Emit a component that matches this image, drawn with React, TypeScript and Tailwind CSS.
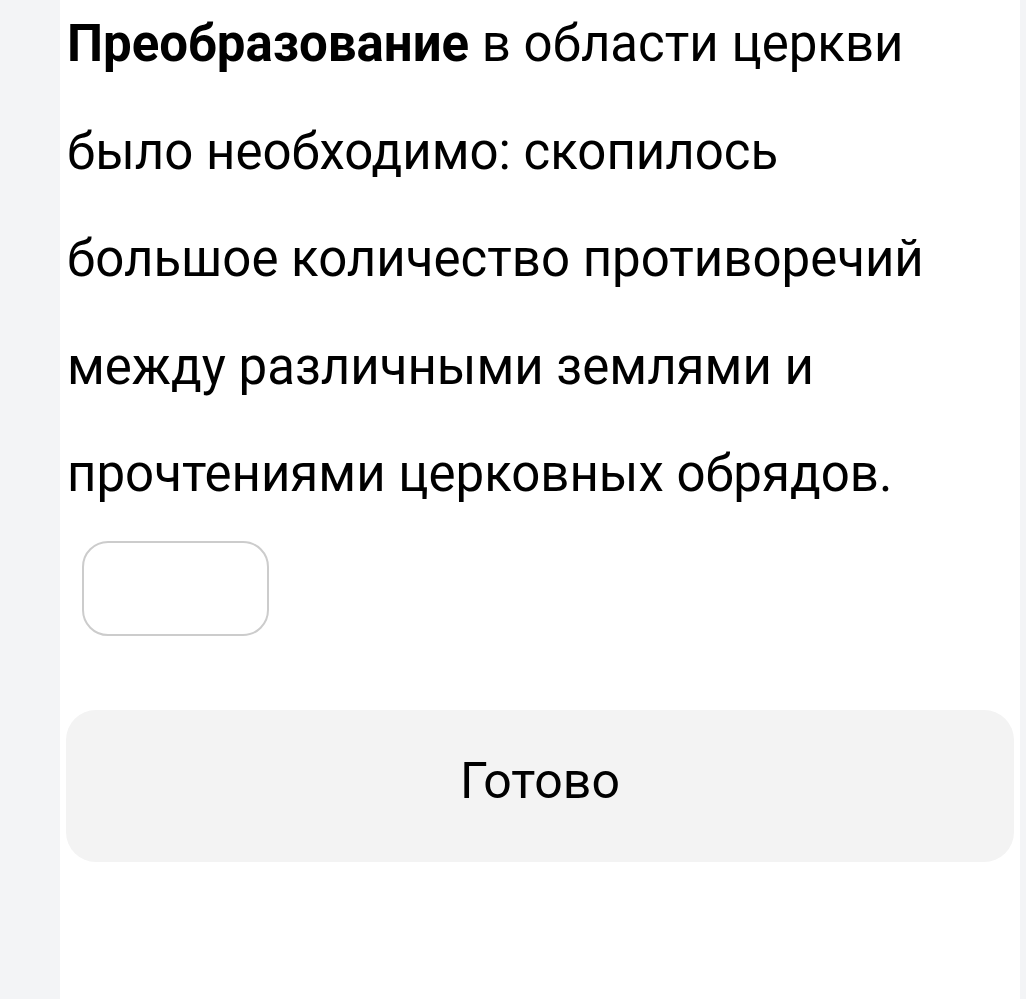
export default function App() {
  return (
    <div className="min-h-[999px] bg-[#f3f4f6] pl-[60px] pr-[6px] flex" style={{ fontFamily: 'Roboto, "Noto Sans", sans-serif' }}>
      <main className="flex-1 min-h-[999px] bg-white px-[6px] overflow-hidden">
        <p className="mt-[-10px] pl-[1px] text-[51px] leading-[107.5px] text-black">
          <b className="font-bold">Преобразование</b> в области церкви
          <br />
          было необходимо: скопилось
          <br />
          большое количество противоречий
          <br />
          между различными землями и
          <br />
          прочтениями церковных обрядов.
        </p>

        <div className="mt-[13px] pl-[16px]">
          <input
            type="text"
            className="w-[187px] h-[95px] rounded-[26px] border-[2.5px] border-[#cccccc] bg-white outline-none text-[40px] px-4"
          />
        </div>

        <button
          type="button"
          className="mt-[74px] w-full h-[152px] rounded-[30px] bg-[#f3f3f3] text-[50px] text-black flex items-center justify-center pb-[8px]"
        >
          Готово
        </button>
      </main>
    </div>
  );
}
